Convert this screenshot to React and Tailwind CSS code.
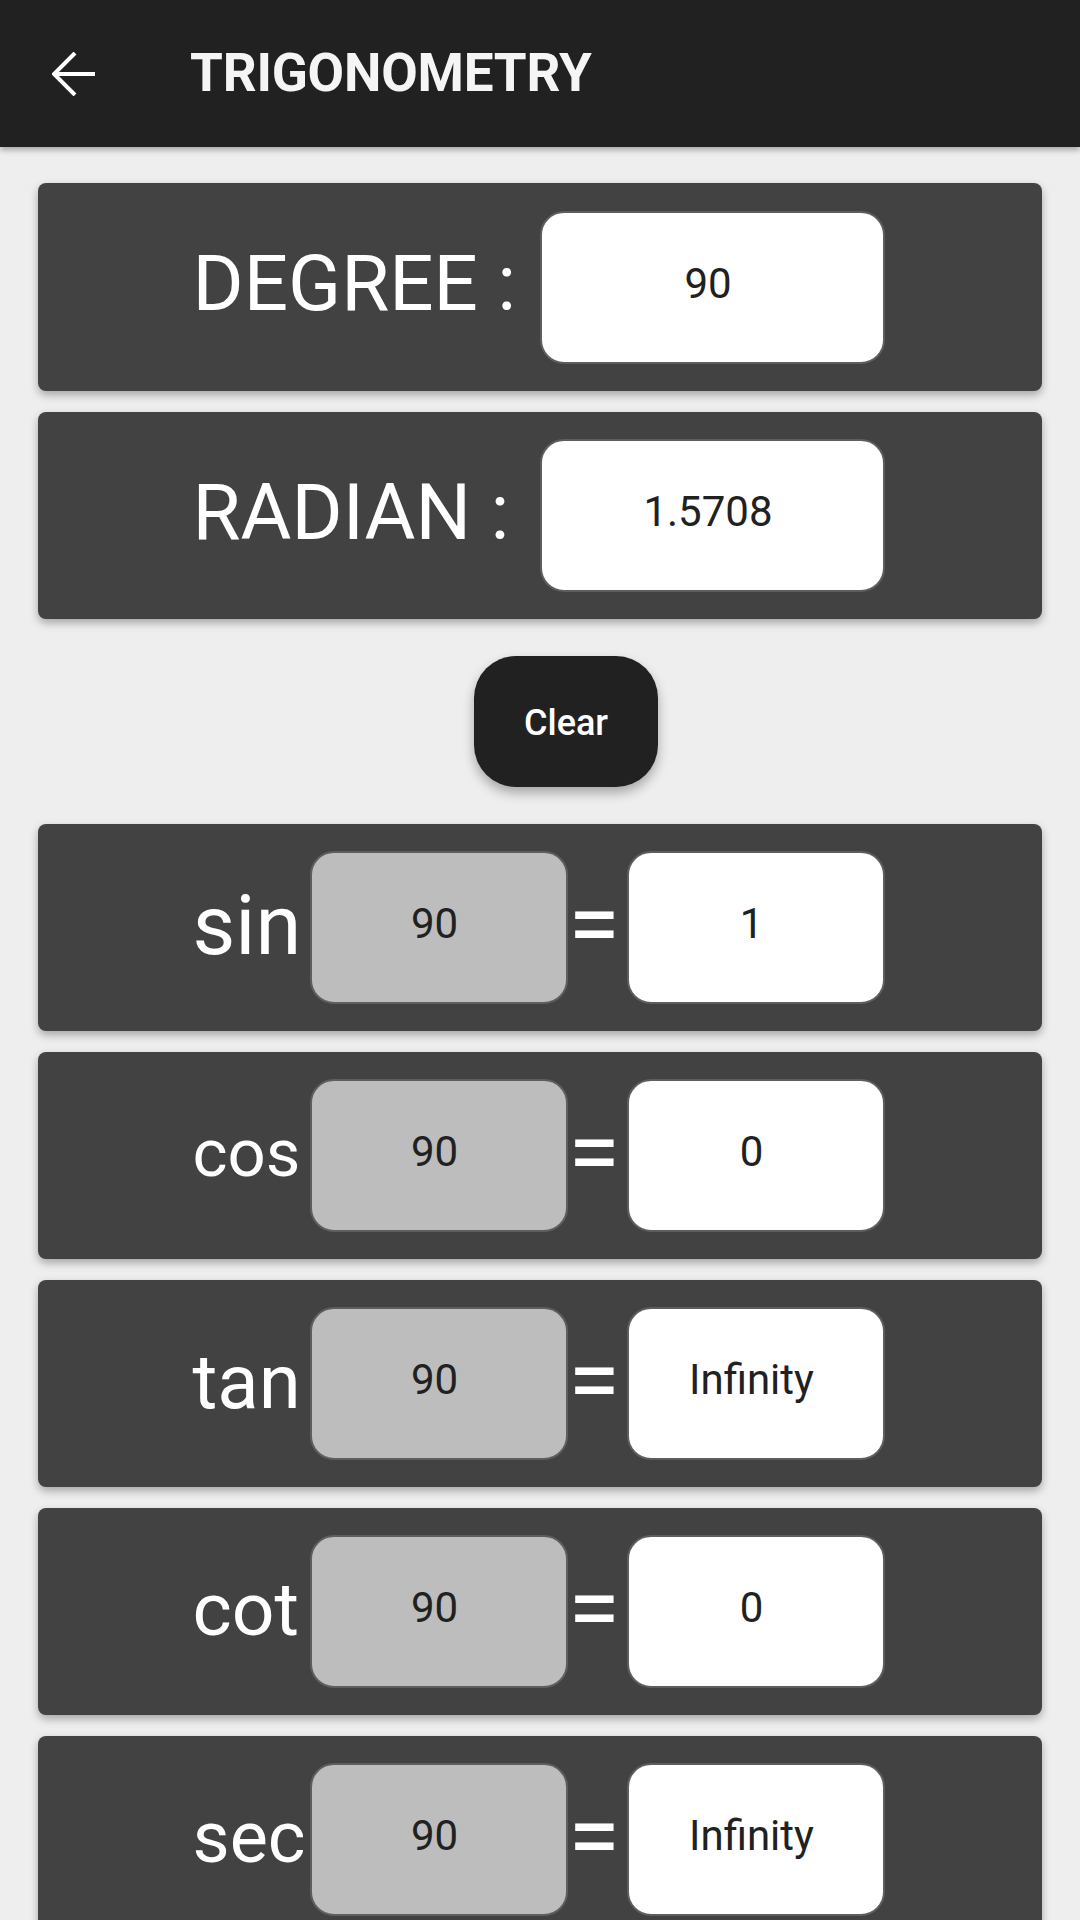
import React, { useState } from "react";

// label sizes differ because the original auto-fits each label into the same width
const rows = [
  { fn: "sin", value: "1", size: "text-[83px]" },
  { fn: "cos", value: "0", size: "text-[67px]" },
  { fn: "tan", value: "Infinity", size: "text-[76px]" },
  { fn: "cot", value: "0", size: "text-[75px]" },
  { fn: "sec", value: "Infinity", size: "text-[72px]" },
];

function BackArrow() {
  return (
    <svg width="44" height="44" viewBox="0 0 44 44" fill="none" stroke="#ffffff" strokeWidth="4">
      <polyline points="23,1 2,22 23,43" />
      <line x1="2" y1="22" x2="43" y2="22" />
    </svg>
  );
}

function Box({ value, gray, className }) {
  return (
    <div
      className={
        "flex items-center justify-center h-[153px] rounded-[24px] border-2 border-[#5e5e5e] text-[42px] text-[#212121] pb-[8px] pr-[8px] " +
        (gray ? "bg-[#bdbdbd] " : "bg-white ") +
        className
      }
    >
      {value}
    </div>
  );
}

export default function App() {
  const [degree] = useState("90"); // input degree
  const [radian] = useState("1.5708");

  return (
    <div className="h-[1920px] overflow-hidden bg-[#eeeeee]" style={{ fontFamily: "Roboto, sans-serif" }}>
      {/* Header */}
      <div className="h-[147px] bg-[#212121] flex items-center shadow-[0_3px_6px_rgba(0,0,0,0.3)] relative z-10">
        <div className="ml-[52px] w-[44px] flex items-center">
          <BackArrow />
        </div>
        <div className="ml-[94px] text-[53px] font-bold text-[#f5f5f5] tracking-[-0.2px]">TRIGONOMETRY</div>
      </div>

      <div className="mx-[38px] pt-[36px]">
        {/* Degree */}
        <div className="h-[208px] bg-[#424242] rounded-[8px] shadow-[0_4px_8px_rgba(0,0,0,0.3)] flex items-center justify-center">
          <div className="w-[347px] -ml-[3px] text-[78px] text-white leading-none mb-[6px]">DEGREE :</div>
          <Box value={degree} className="w-[345px]" />
        </div>

        {/* Radian */}
        <div className="mt-[21px] h-[207px] bg-[#424242] rounded-[8px] shadow-[0_4px_8px_rgba(0,0,0,0.3)] flex items-center justify-center">
          <div className="w-[347px] -ml-[3px] text-[78px] text-white leading-none mb-[6px]">RADIAN :</div>
          <Box value={radian} className="w-[345px]" />
        </div>

        {/* Clear */}
        <div className="flex justify-center pl-[52px] mt-[37px] mb-[37px]">
          <button className="w-[184px] h-[131px] rounded-[42px] bg-[#212121] text-white text-[36px] font-medium pt-[3px] shadow-[0_6px_12px_rgba(0,0,0,0.3)]">
            Clear
          </button>
        </div>

        {/* Functions */}
        <div className="flex flex-col gap-[21px]">
          {rows.map((r) => (
            <div
              key={r.fn}
              className="h-[207px] shrink-0 bg-[#424242] rounded-[8px] shadow-[0_4px_8px_rgba(0,0,0,0.3)] flex items-center justify-center"
            >
              <div className={"w-[117px] -ml-[3px] text-white leading-none mb-[4px] whitespace-nowrap " + r.size}>{r.fn}</div>
              <Box value={degree} gray className="w-[258px]" />
              <div className="w-[59px] text-center text-[94px] text-white leading-none mb-[8px] -ml-[3px] mr-[3px]">=</div>
              <Box value={r.value} className="w-[258px]" />
            </div>
          ))}
        </div>
      </div>
    </div>
  );
}
